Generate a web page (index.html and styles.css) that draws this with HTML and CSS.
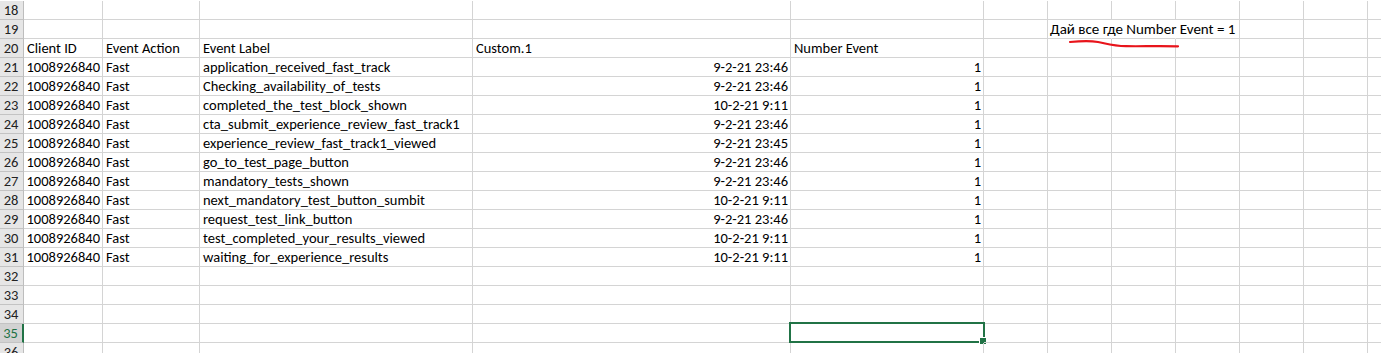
FILE: index.html
```html
<!DOCTYPE html>
<html>
<head>
<meta charset="utf-8">
<link rel="stylesheet" href="styles.css">
</head>
<body>
<div class="sheet">
  <div class="row"><div class="rh">18</div><div class="c"></div><div class="c"></div><div class="c"></div><div class="c"></div><div class="c"></div><div class="c"></div><div class="c"></div><div class="c"></div><div class="c"></div><div class="c"></div><div class="c"></div><div class="c"></div></div>
  <div class="row"><div class="rh">19</div><div class="c"></div><div class="c"></div><div class="c"></div><div class="c"></div><div class="c"></div><div class="c"></div><div class="c nob note">Дай все где Number Event = 1</div><div class="c nob"></div><div class="c"></div><div class="c"></div><div class="c"></div><div class="c"></div></div>
  <div class="row"><div class="rh">20</div><div class="c">Client ID</div><div class="c">Event Action</div><div class="c">Event Label</div><div class="c">Custom.1</div><div class="c">Number Event</div><div class="c"></div><div class="c"></div><div class="c"></div><div class="c"></div><div class="c"></div><div class="c"></div><div class="c"></div></div>
  <div class="row"><div class="rh">21</div><div class="c r">1008926840</div><div class="c">Fast</div><div class="c">application_received_fast_track</div><div class="c r">9-2-21 23:46</div><div class="c r">1</div><div class="c"></div><div class="c"></div><div class="c"></div><div class="c"></div><div class="c"></div><div class="c"></div><div class="c"></div></div>
  <div class="row"><div class="rh">22</div><div class="c r">1008926840</div><div class="c">Fast</div><div class="c">Checking_availability_of_tests</div><div class="c r">9-2-21 23:46</div><div class="c r">1</div><div class="c"></div><div class="c"></div><div class="c"></div><div class="c"></div><div class="c"></div><div class="c"></div><div class="c"></div></div>
  <div class="row"><div class="rh">23</div><div class="c r">1008926840</div><div class="c">Fast</div><div class="c">completed_the_test_block_shown</div><div class="c r">10-2-21 9:11</div><div class="c r">1</div><div class="c"></div><div class="c"></div><div class="c"></div><div class="c"></div><div class="c"></div><div class="c"></div><div class="c"></div></div>
  <div class="row"><div class="rh">24</div><div class="c r">1008926840</div><div class="c">Fast</div><div class="c">cta_submit_experience_review_fast_track1</div><div class="c r">9-2-21 23:46</div><div class="c r">1</div><div class="c"></div><div class="c"></div><div class="c"></div><div class="c"></div><div class="c"></div><div class="c"></div><div class="c"></div></div>
  <div class="row"><div class="rh">25</div><div class="c r">1008926840</div><div class="c">Fast</div><div class="c">experience_review_fast_track1_viewed</div><div class="c r">9-2-21 23:45</div><div class="c r">1</div><div class="c"></div><div class="c"></div><div class="c"></div><div class="c"></div><div class="c"></div><div class="c"></div><div class="c"></div></div>
  <div class="row"><div class="rh">26</div><div class="c r">1008926840</div><div class="c">Fast</div><div class="c">go_to_test_page_button</div><div class="c r">9-2-21 23:46</div><div class="c r">1</div><div class="c"></div><div class="c"></div><div class="c"></div><div class="c"></div><div class="c"></div><div class="c"></div><div class="c"></div></div>
  <div class="row"><div class="rh">27</div><div class="c r">1008926840</div><div class="c">Fast</div><div class="c">mandatory_tests_shown</div><div class="c r">9-2-21 23:46</div><div class="c r">1</div><div class="c"></div><div class="c"></div><div class="c"></div><div class="c"></div><div class="c"></div><div class="c"></div><div class="c"></div></div>
  <div class="row"><div class="rh">28</div><div class="c r">1008926840</div><div class="c">Fast</div><div class="c">next_mandatory_test_button_sumbit</div><div class="c r">10-2-21 9:11</div><div class="c r">1</div><div class="c"></div><div class="c"></div><div class="c"></div><div class="c"></div><div class="c"></div><div class="c"></div><div class="c"></div></div>
  <div class="row"><div class="rh">29</div><div class="c r">1008926840</div><div class="c">Fast</div><div class="c">request_test_link_button</div><div class="c r">9-2-21 23:46</div><div class="c r">1</div><div class="c"></div><div class="c"></div><div class="c"></div><div class="c"></div><div class="c"></div><div class="c"></div><div class="c"></div></div>
  <div class="row"><div class="rh">30</div><div class="c r">1008926840</div><div class="c">Fast</div><div class="c">test_completed_your_results_viewed</div><div class="c r">10-2-21 9:11</div><div class="c r">1</div><div class="c"></div><div class="c"></div><div class="c"></div><div class="c"></div><div class="c"></div><div class="c"></div><div class="c"></div></div>
  <div class="row"><div class="rh">31</div><div class="c r">1008926840</div><div class="c">Fast</div><div class="c">waiting_for_experience_results</div><div class="c r">10-2-21 9:11</div><div class="c r">1</div><div class="c"></div><div class="c"></div><div class="c"></div><div class="c"></div><div class="c"></div><div class="c"></div><div class="c"></div></div>
  <div class="row"><div class="rh">32</div><div class="c"></div><div class="c"></div><div class="c"></div><div class="c"></div><div class="c"></div><div class="c"></div><div class="c"></div><div class="c"></div><div class="c"></div><div class="c"></div><div class="c"></div><div class="c"></div></div>
  <div class="row"><div class="rh">33</div><div class="c"></div><div class="c"></div><div class="c"></div><div class="c"></div><div class="c"></div><div class="c"></div><div class="c"></div><div class="c"></div><div class="c"></div><div class="c"></div><div class="c"></div><div class="c"></div></div>
  <div class="row"><div class="rh">34</div><div class="c"></div><div class="c"></div><div class="c"></div><div class="c"></div><div class="c"></div><div class="c"></div><div class="c"></div><div class="c"></div><div class="c"></div><div class="c"></div><div class="c"></div><div class="c"></div></div>
  <div class="row"><div class="rh sel">35</div><div class="c"></div><div class="c"></div><div class="c"></div><div class="c"></div><div class="c"><div class="cursor"><span class="handle"></span></div></div><div class="c"></div><div class="c"></div><div class="c"></div><div class="c"></div><div class="c"></div><div class="c"></div><div class="c"></div></div>
  <div class="row"><div class="rh">36</div><div class="c"></div><div class="c"></div><div class="c"></div><div class="c"></div><div class="c"></div><div class="c"></div><div class="c"></div><div class="c"></div><div class="c"></div><div class="c"></div><div class="c"></div><div class="c"></div></div>
  <svg class="ink" width="120" height="12" viewBox="0 0 120 12"><path d="M2 3 C 12 2, 22 1.5, 30 3 S 45 7, 58 7.2 S 90 7, 110 7.3" fill="none" stroke="#e8141b" stroke-width="2.2" stroke-linecap="round"/></svg>
</div>
</body>
</html>
```
FILE: styles.css
```css
html, body {
  margin: 0;
  padding: 0;
  background: #ffffff;
  overflow: hidden;
}
.sheet {
  position: relative;
  padding-top: 1px;
  font-family: "Carlito", "Lato", sans-serif;
  font-size: 14.5px;
  color: #000;
}
.row {
  display: grid;
  grid-template-columns: 24px 79px 97px 273px 318px 193px 64px 64px 64px 64px 64px 64px 64px;
  height: 19px;
}
.rh, .c {
  box-sizing: border-box;
  height: 19px;
  line-height: 18px;
  border-bottom: 1px solid #d4d4d4;
  border-right: 1px solid #d4d4d4;
  white-space: nowrap;
}
.rh {
  background: #e6e6e6;
  color: #222;
  text-align: center;
  border-bottom-color: #c3c3c3;
  border-right-color: #bdbdbd;
  padding-right: 1px;
}
.rh.sel {
  background: #d2d2d2;
  color: #217346;
  border-right: 2px solid #217346;
}
.c {
  padding: 0 2px 0 3px;
  overflow: visible;
  position: relative;
}
.c.r {
  text-align: right;
  padding: 0 2px 0 2px;
}
.c.nob {
  border-right-color: transparent;
  padding-left: 2px;
}
.note {
  font-size: 15px;
}
.cursor {
  position: absolute;
  left: -2px;
  top: -2px;
  width: 196px;
  height: 21px;
  box-sizing: border-box;
  border: 2px solid #217346;
}
.handle {
  position: absolute;
  right: -4px;
  bottom: -4px;
  width: 6px;
  height: 6px;
  background: #217346;
  border: 1px solid #fff;
}
.ink {
  position: absolute;
  left: 1068px;
  top: 39px;
}
```
